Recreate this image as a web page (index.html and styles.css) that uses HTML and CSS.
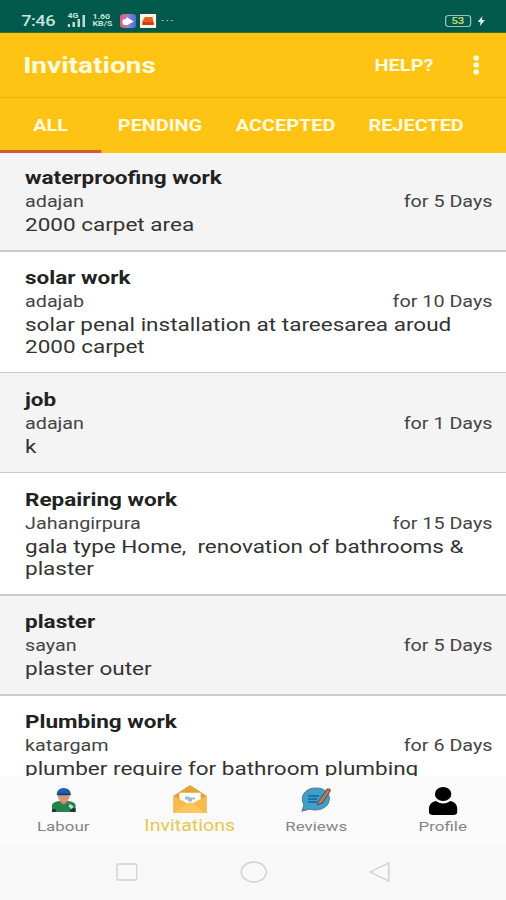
FILE: index.html
```
<!DOCTYPE html>
<html lang="en">
<head>
<meta charset="utf-8">
<title>Invitations</title>
<link rel="stylesheet" href="styles.css">
</head>
<body>
<div class="screen">
  <header class="status">
    <span class="time">7:46</span>
    <span class="net">4G</span>
    <svg class="signal" width="15" height="13" viewBox="0 0 15 13"><path d="M0 10h2v3H0zM4 8h2v5H4zM8 5h2v8H8zM12 1h2v12h-2z" fill="#b9ddd4"/></svg>
    <span class="speed"><b>1.60</b><b>KB/S</b></span>
    <svg class="app1" width="13" height="14" viewBox="0 0 13 14"><defs><linearGradient id="g"><stop stop-color="#e65c76"/><stop offset=".5" stop-color="#a87bd2"/><stop offset="1" stop-color="#396fdc"/></linearGradient></defs><rect width="13" height="14" rx="3" fill="url(#g)"/><rect x="2" y="5" width="5" height="6" rx="2" fill="#fff"/><path d="M5 3l6 4.500-6 4z" fill="#fff"/></svg>
    <svg class="app2" width="13" height="14" viewBox="0 0 13 14"><rect width="13" height="14" fill="#fff3e7"/><path d="M2 7l2-4h6l1 8H2z" fill="#e8631c"/><path d="M2 8h9v3H2z" fill="#cf3f16"/></svg>
    <span class="more">•••</span>
    <span class="battery">53</span>
    <svg class="bolt" width="6" height="10" viewBox="0 0 6 10"><path d="M4 0L0 6h2.300L2 10l4-6H3.500z" fill="#d9eee8"/></svg>
  </header>
  <div class="bar">
    <h1>Invitations</h1>
    <span class="help">HELP?</span>
    <svg class="dots" width="6" height="20" viewBox="0 0 6 20"><g fill="#fffbe0"><ellipse cx="3" cy="3" rx="2.300" ry="2.700"/><ellipse cx="3" cy="10" rx="2.300" ry="2.700"/><ellipse cx="3" cy="17" rx="2.300" ry="2.700"/></g></svg>
  </div>
  <nav class="tabs"><span class="tab active">ALL</span><span class="tab pending">PENDING</span><span class="tab accepted">ACCEPTED</span><span class="tab rejected">REJECTED</span></nav>
  <main class="list">
    <article class="row alt"><h2>waterproofing work</h2><div class="meta"><span>adajan</span><span>for 5 Days</span></div><p>2000 carpet area</p></article>
    <article class="row thin"><h2>solar work</h2><div class="meta"><span>adajab</span><span>for 10 Days</span></div><p>solar penal installation at tareesarea aroud<br>2000 carpet</p></article>
    <article class="row alt thin"><h2>job</h2><div class="meta"><span>adajan</span><span>for 1 Days</span></div><p>k</p></article>
    <article class="row"><h2>Repairing work</h2><div class="meta"><span>Jahangirpura</span><span>for 15 Days</span></div><p>gala type Home,&nbsp; renovation of bathrooms &amp;<br>plaster</p></article>
    <article class="row alt"><h2>plaster</h2><div class="meta"><span>sayan</span><span>for 5 Days</span></div><p>plaster outer</p></article>
    <article class="row"><h2>Plumbing work</h2><div class="meta"><span>katargam</span><span>for 6 Days</span></div><p>plumber require for bathroom plumbing</p></article>
  </main>
  <nav class="bottom">
    <div class="item">
      <svg width="22" height="26" viewBox="0 0 28 28" preserveAspectRatio="none"><path d="M2 27v-7q0-4 7-5h10q7 1 7 5v7z" fill="#23834b"/><path d="M2 24h4v3H2zM21 23h5v4h-5z" fill="#252f35"/><path d="M20 18l4 3-2 3-3-3z" fill="#c7ddd4"/><path d="M10 12h8v4l-4 3-4-3z" fill="#c98769"/><ellipse cx="14" cy="10" rx="6" ry="6" fill="#d39a7e"/><path d="M7 8q0-7 7-7t7 7q-7 1-14 0z" fill="#1c5fb0"/><path d="M7 7h14v2H7z" fill="#17406f"/></svg>
      <span>Labour</span>
    </div>
    <div class="item current">
      <svg width="28" height="29" viewBox="0 0 36 30" preserveAspectRatio="none"><path d="M1 11L18 0l17 11v18H1z" fill="#e5a238"/><path d="M7 8h22v7l-11 7-11-7z" fill="#fffdf3"/><path d="M13 12h4v1h6v2h-3v2h-4v-2h-3z" fill="#94b9da"/><path d="M1 11l14 8L1 29zM35 11l-14 8 14 10z" fill="#f6ba4e"/><path d="M1 29l14-10q3-2 6 0l14 10z" fill="#ffc75b"/></svg>
      <span>Invitations</span>
    </div>
    <div class="item">
      <svg width="25" height="26" viewBox="0 0 31 26" preserveAspectRatio="none"><path d="M2 24l2-6C-1 9 6 1 16 1c9 0 14 6 13 12-1 8-11 12-19 9z" fill="#3e9fcb" stroke="#527d8e"/><path d="M8 9h11M8 12h9M8 15h9" stroke="#17638f" stroke-width="1.500"/><path d="M18 15L27 2l3 2-8 12-5 2z" fill="#ad8061" stroke="#604f49"/><path d="M27 2l2-1 2 2-1 1z" fill="#d75848"/></svg>
      <span>Reviews</span>
    </div>
    <div class="item">
      <svg width="23" height="28" viewBox="0 0 28 28" preserveAspectRatio="none"><ellipse cx="14" cy="7" rx="8" ry="7"/><path d="M0 24c0-6 2-9 7-10q7 5 14 0c5 1 7 4 7 10 0 3-2 4-4 4H4c-2 0-4-1-4-4z"/></svg>
      <span>Profile</span>
    </div>
  </nav>
  <footer class="keys">
    <svg width="17" height="22" viewBox="0 0 17 22"><rect x=".5" y="3" width="16" height="16" rx="1"/></svg>
    <svg width="22" height="22" viewBox="0 0 22 22"><ellipse cx="11" cy="11" rx="10" ry="10"/></svg>
    <svg width="17" height="22" viewBox="0 0 17 22"><path d="M16 2v18L1 11z"/></svg>
  </footer>
</div>
</body>
</html>
```

FILE: styles.css
```
* { box-sizing: border-box; margin: 0; padding: 0; }
html, body { width: 506px; height: 900px; overflow: hidden; background: #fafafa; }
/* Wide pixels: the 404.8px layout is stretched to fill the window. */
.screen { width: 404.8px; height: 900px; display: flex; flex-direction: column; transform: scaleX(1.25); transform-origin: 0 0; font-family: Roboto, "Liberation Sans", sans-serif; color: #222; }
.screen svg { flex: none; display: block; }
.status { height: 33px; flex: none; background: #00594b; border-bottom: 1px solid #416c29; display: flex; align-items: center; padding: 9px 15px 0 17px; color: #c6e3dc; }
.time { font-size: 14.500px; width: 37px; margin-top: 2px; font-weight: 500; letter-spacing: -.4px; }
.net { font-size: 7px; font-weight: bold; width: 0; align-self: flex-start; margin-top: 4px; line-height: 7px; }
.signal { margin-right: 5px; }
.speed { width: 19px; display: grid; font-size: 7px; line-height: 7px; margin-right: 3px; }
.app1 { margin-right: 3px; }
.app2 { margin-right: 4px; }
.more { font-size: 6px; letter-spacing: 1.700px; }
.battery { margin-left: auto; width: 21px; height: 12px; border: 1px solid #9dc3b9; border-radius: 3px; font-size: 9px; font-weight: bold; line-height: 10px; text-align: center; color: #c1d873; }
.bolt { margin-left: 5px; margin-right: 2px; }
.bar { height: 65px; flex: none; background: #ffc313; border-bottom: 1px solid #efae08; display: flex; align-items: center; padding: 0 21px 0 18.500px; color: #fffbe0; }
.bar h1 { font-size: 22.400px; font-weight: 700; }
.help { margin-left: auto; font-size: 16px; font-weight: 700; }
.dots { margin-left: 31px; }
.tabs { height: 55px; flex: none; background: #ffc313; display: grid; grid-template-columns: 81px 94px 107px 1fr; grid-template-rows: 55px; color: #fffbe0; font-size: 15.900px; font-weight: 700; line-height: 56px; text-align: center; }
.active { border-bottom: 3px solid #d35b33; }
.rejected { padding-right: 21px; }
.list { height: 623px; flex: none; overflow: hidden; background: #fff; }
.row { padding: 15px 10.800px 14px 20px; border-bottom: 2px solid #cbcbcb; background: #fff; }
.row:first-child { margin-top: -1px; }
.alt { background: #f4f4f4; }
.thin { border-bottom-width: 1px; }
.thin + .row { padding-top: 16px; }
.row h2 { font-size: 18px; line-height: 22px; margin-bottom: 1px; font-weight: 700; }
.meta { display: flex; justify-content: space-between; font-size: 15.800px; line-height: 24px; color: #444; }
.row p { font-size: 18px; line-height: 22px; white-space: nowrap; color: #333; }
.bottom { height: 68px; flex: none; display: grid; grid-template-columns: repeat(4, 1fr); background: #fafafa; }
.item { display: flex; flex-direction: column; align-items: center; height: 59px; justify-content: space-between; padding-top: 11px; color: #858585; font-size: 13.500px; }
.item span { line-height: 18px; }
.item.current { color: #e6c850; font-size: 15.700px; padding-top: 9px; }
.keys { flex: 1; display: flex; justify-content: center; gap: 81.500px; align-items: center; padding-left: 1px; background: #f8f8f8; fill: none; stroke: #d2d2d2; stroke-width: 1.300; }
```
